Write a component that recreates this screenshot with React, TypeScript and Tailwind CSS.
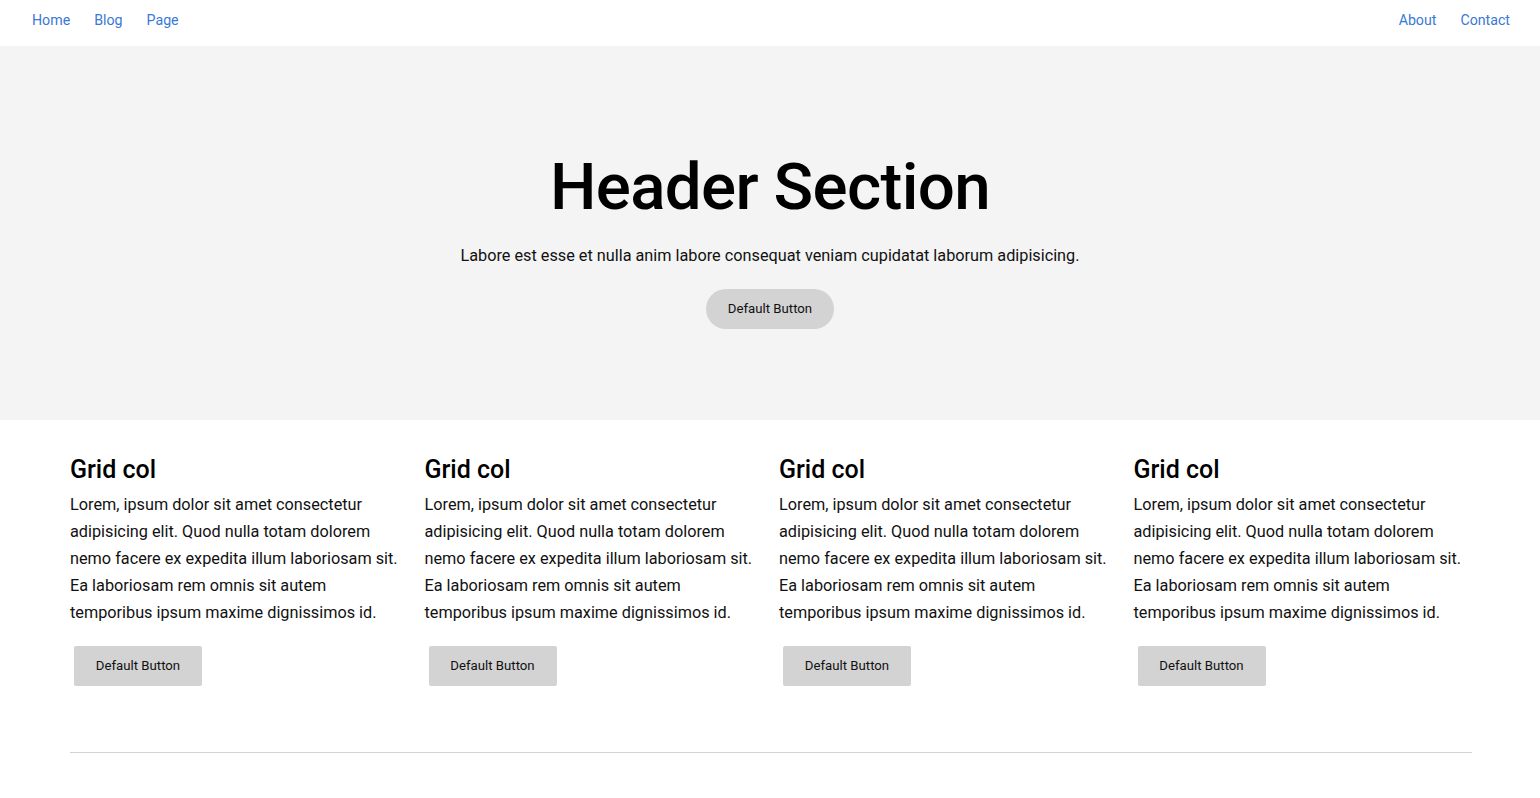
const links = ["Home", "Blog", "Page"];
const rightLinks = ["About", "Contact"];

const cols = [1, 2, 3, 4];

export default function App() {
  return (
    <div className="min-h-screen bg-white font-['Roboto',sans-serif] text-[#111]">
      <nav className="flex h-[46px] items-start justify-between pt-[8px] pl-5 pr-[18px]">
        <ul className="flex">
          {links.map((l) => (
            <li key={l}>
              <a href="#" className="px-3 text-[14.2px] leading-5 text-[#3a78d6]">
                {l}
              </a>
            </li>
          ))}
        </ul>
        <ul className="flex">
          {rightLinks.map((l) => (
            <li key={l}>
              <a href="#" className="px-3 text-[14.2px] leading-5 text-[#3a78d6]">
                {l}
              </a>
            </li>
          ))}
        </ul>
      </nav>

      <header className="flex h-[374px] flex-col items-center bg-[#f4f4f4] pt-[101px] text-center">
        <h1 className="text-[65.5px] leading-[80px] font-medium tracking-[-0.01em] text-black">
          Header Section
        </h1>
        <p className="mt-[17px] text-[16.25px] leading-6 text-[#111]">
          Labore est esse et nulla anim labore consequat veniam cupidatat laborum adipisicing.
        </p>
        <button className="mt-[21px] h-10 w-32 rounded-full bg-[#d3d3d3] text-[13.2px] text-[#111]">
          Default Button
        </button>
      </header>

      <section className="ml-[70px] mr-[68px] pt-[34px]">
        <div className="grid grid-cols-4 gap-4">
          {cols.map((c) => (
            <div key={c}>
              <h2 className="text-[25px] leading-8 font-medium text-black">Grid col</h2>
              <p className="mt-[5px] text-[16.25px] leading-[27px] text-[#111]">
                Lorem, ipsum dolor sit amet consectetur adipisicing elit. Quod nulla totam dolorem
                nemo facere ex expedita illum laboriosam sit. Ea laboriosam rem omnis sit autem
                temporibus ipsum maxime dignissimos id.
              </p>
              <button className="mt-[20px] ml-1 h-10 w-32 rounded-[2px] bg-[#d3d3d3] text-[13.2px] text-[#111]">
                Default Button
              </button>
            </div>
          ))}
        </div>
        <hr className="mt-[66px] border-t border-[#d3d3d3]" />
      </section>
    </div>
  );
}
